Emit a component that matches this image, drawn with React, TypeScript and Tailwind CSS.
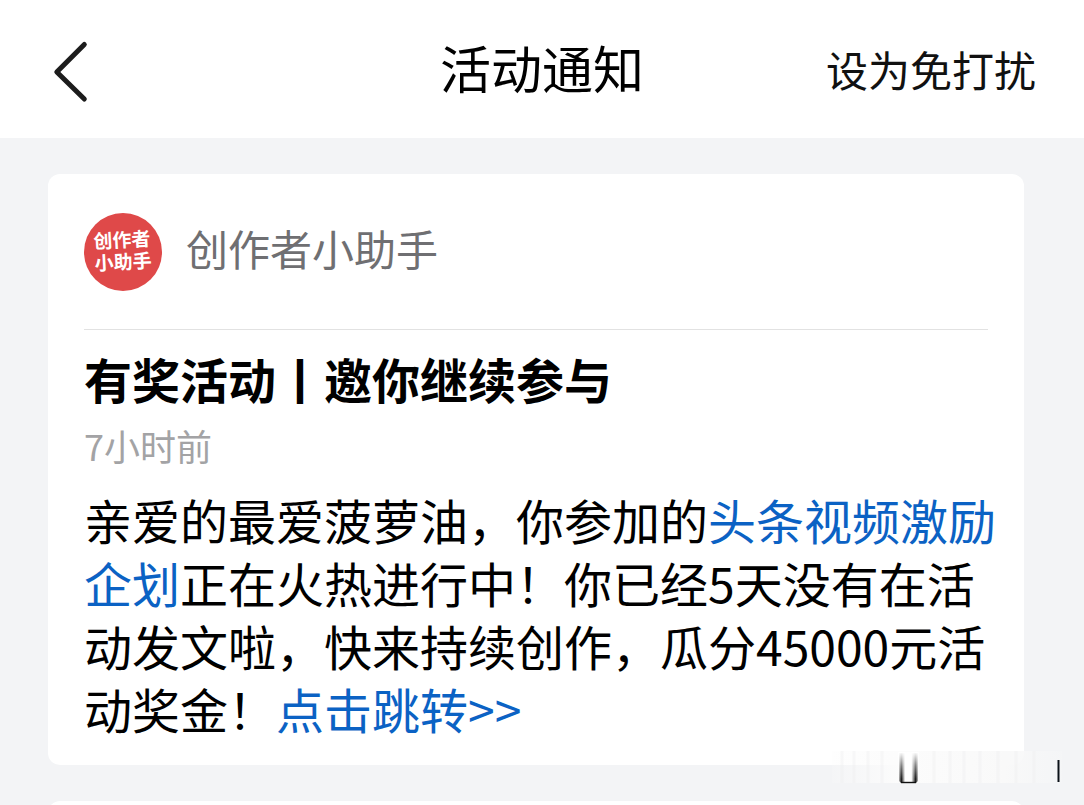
function BackIcon() {
  return (
    <svg viewBox="0 0 44 64" className="h-16 w-11" fill="none" stroke="#1c1c1c" strokeWidth="5" strokeLinecap="round" strokeLinejoin="round" aria-hidden="true">
      <path d="M36.300 5.500 8.800 33 36.300 60" />
    </svg>
  );
}

function Header() {
  return (
    <header className="grid h-[138px] grid-cols-[1fr_auto_1fr] items-center bg-white px-12 pb-1">
      <button type="button" aria-label="返回" className="mt-2 justify-self-start">
        <BackIcon />
      </button>
      <h1 className="text-[51px] leading-[72px] text-black">活动通知</h1>
      <button type="button" className="mt-1 justify-self-end text-[42px] leading-[60px] text-[#111]">
        设为免打扰
      </button>
    </header>
  );
}

function Avatar() {
  return (
    <div className="flex size-[78px] shrink-0 items-center justify-center rounded-full bg-[#df4949]">
      <p className="-rotate-3 pb-1 text-center text-[19px] leading-[22px] font-bold text-white">
        创作者
        <br />
        小助手
      </p>
    </div>
  );
}

function NoticeCard() {
  return (
    <article className="rounded-xl bg-white px-9 pb-[25px]">
      <div className="flex items-center gap-6 border-b border-[#e2e2e2] pt-[39px] pb-[38px]">
        <Avatar />
        <p className="pb-2 text-[42px] leading-[60px] text-[#6f6f72]">创作者小助手</p>
      </div>
      <h2 className="mt-3 text-[48px] leading-[72px] font-bold text-black">有奖活动丨邀你继续参与</h2>
      <p className="mt-1 text-[36px] leading-[54px] text-[#a3a3a5]">7小时前</p>
      <p className="-mr-3 mt-4 text-[48px] leading-[63px] text-black">
        亲爱的最爱菠萝油，你参加的
        <a href="#plan" className="text-[#0b62c4]">头条视频激励企划</a>
        正在火热进行中！你已经5天没有在活动发文啦，快来持续创作，瓜分45000元活动奖金！
        <a href="#jump" className="text-[#0b62c4]">点击跳转&gt;&gt;</a>
      </p>
    </article>
  );
}

function CornerMark() {
  return (
    <svg viewBox="0 0 232 34" className="absolute right-5 bottom-5 h-[34px] w-[232px]" aria-hidden="true">
      <defs>
        <linearGradient id="haze">
          <stop offset="0" stopColor="#fafafa" stopOpacity="0.2" />
          <stop offset="0.3" stopColor="#fcfcfc" />
          <stop offset="0.75" stopColor="#f9f9f9" />
          <stop offset="1" stopColor="#f5f6f7" stopOpacity="0.6" />
        </linearGradient>
        <linearGradient id="fade" x1="0" y1="0" x2="0" y2="1">
          <stop offset="0" stopColor="#fff" />
          <stop offset="0.5" stopColor="#fff" stopOpacity="0.45" />
          <stop offset="1" stopColor="#fff" stopOpacity="0" />
        </linearGradient>
        <linearGradient id="cup">
          <stop offset="0" stopColor="#222" stopOpacity="0.3" />
          <stop offset="0.12" stopColor="#111" />
          <stop offset="0.32" stopColor="#fff" />
          <stop offset="0.65" stopColor="#fff" />
          <stop offset="0.88" stopColor="#111" />
          <stop offset="1" stopColor="#222" stopOpacity="0.3" />
        </linearGradient>
      </defs>
      <rect width="230" height="32" fill="url(#haze)" />
      <path d="M10 0v32M22 0v32M36 0v32M50 0v32M102 0v32M118 0v32M132 0v32M148 0v32M166 0v32M184 0v32M202 0v32" stroke="#eeeeef" strokeWidth="3" opacity="0.35" />
      <path d="M67 2h19v28l-2 2H69l-2-2z" fill="url(#cup)" />
      <rect x="66" y="1" width="21" height="27" fill="url(#fade)" />
      <path d="M69 31.500h15" stroke="#111" strokeWidth="1.400" />
      <path d="M226.500 9v22" stroke="#0b1118" strokeWidth="2" />
    </svg>
  );
}

export default function App() {
  return (
    <div className='relative h-screen overflow-hidden bg-[#f3f4f6] font-["Noto_Sans_CJK_SC",sans-serif]'>
      <Header />
      <main className="flex flex-col gap-9 pt-9 pr-[60px] pl-12">
        <NoticeCard />
        <article className="h-48 rounded-xl bg-white" />
      </main>
      <CornerMark />
    </div>
  );
}
